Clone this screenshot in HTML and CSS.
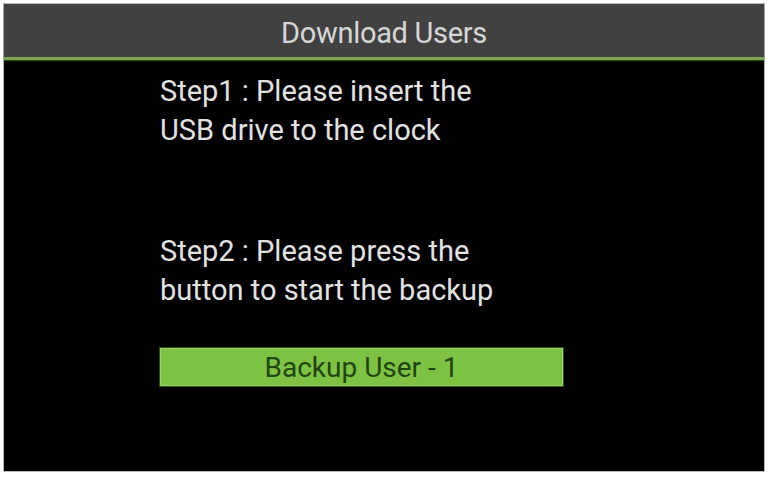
FILE: index.html
```html
<!DOCTYPE html>
<html lang="en">
<head>
  <meta charset="UTF-8" />
  <meta name="viewport" content="width=device-width, initial-scale=1.0"/>
  <title>Download Users</title>
  <link rel="stylesheet" href="styles.css">
</head>
<body>
  <div class="screen">
    <div class="header">Download Users</div>

    <div class="content">
      <p class="step">Step1 : Please insert the<br>USB drive to the clock</p>
      <p class="step step-two">Step2 : Please press the<br>button to start the backup</p>
      <button type="button" class="backup">Backup User - 1</button>
    </div>
  </div>
</body>
</html>
```

FILE: styles.css
```css
body {
  margin: 0;
  background-color: #fff;
  font-family: Roboto, "Open Sans", sans-serif;
}

.screen {
  margin: 3px 3px 5px 3px;
  height: 469px;
  background-color: #000;
  border: 1px solid #b8b8b8;
  box-sizing: border-box;
  display: flex;
  flex-direction: column;
}

.header {
  height: 56px;
  flex-shrink: 0;
  display: flex;
  justify-content: center;
  align-items: center;
  padding-top: 4px;
  box-sizing: border-box;
  background-color: #414141;
  color: #d6d6d6;
  font-size: 29px;
  letter-spacing: -0.3px;
  border-bottom: 3px solid #7da653;
  box-shadow: 0 1px 1px #2d4a1c;
}

.content {
  padding: 12px 0 0 156px;
}

.step {
  margin: 0;
  font-size: 29px;
  line-height: 39px;
  color: #e2e2e2;
}

.step-two {
  margin-top: 82px;
}

.backup {
  margin-top: 38px;
  width: 403px;
  height: 38px;
  padding: 0;
  display: flex;
  justify-content: center;
  align-items: center;
  font-family: Roboto, "Open Sans", sans-serif;
  font-size: 28px;
  color: #1f4512;
  background-color: #7dc243;
  border: 1px solid #9bd66a;
  box-shadow: 0 0 0 1px #2f4f1a;
}
```
